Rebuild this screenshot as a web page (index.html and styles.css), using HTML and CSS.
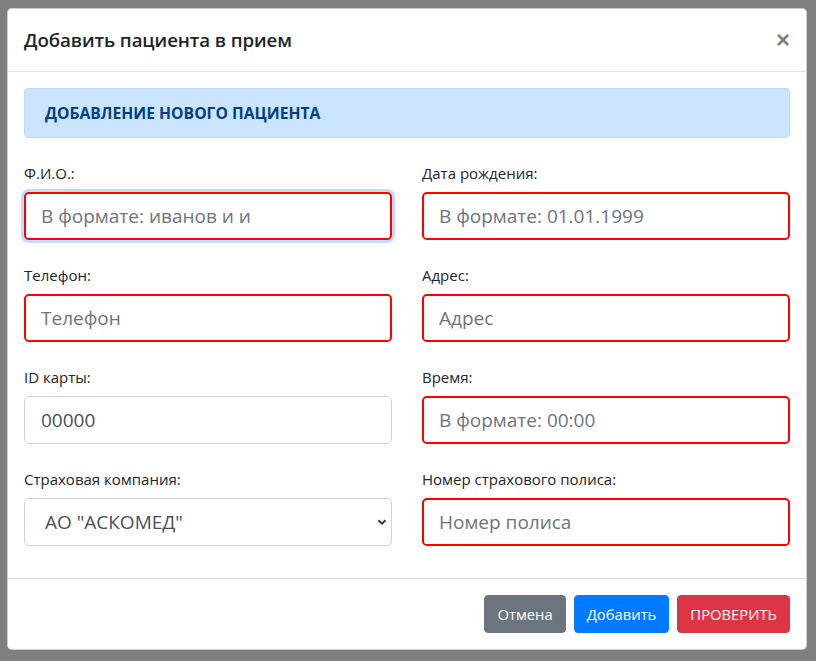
FILE: index.html
```html
<!DOCTYPE html>
<html lang="ru">
<head>
<meta charset="utf-8">
<title>Добавить пациента в прием</title>
<link rel="stylesheet" href="styles.css">
</head>
<body>
<div class="modal">
  <div class="modal-header">
    <h5 class="modal-title">Добавить пациента в прием</h5>
    <button class="close" type="button">&times;</button>
  </div>
  <div class="modal-body">
    <div class="alert">ДОБАВЛЕНИЕ НОВОГО ПАЦИЕНТА</div>
    <div class="form-grid">
      <div class="field">
        <label>Ф.И.О.:</label>
        <input class="control invalid focused" type="text" placeholder="В формате: иванов и и">
      </div>
      <div class="field">
        <label>Дата рождения:</label>
        <input class="control invalid" type="text" placeholder="В формате: 01.01.1999">
      </div>
      <div class="field">
        <label>Телефон:</label>
        <input class="control invalid" type="text" placeholder="Телефон">
      </div>
      <div class="field">
        <label>Адрес:</label>
        <input class="control invalid" type="text" placeholder="Адрес">
      </div>
      <div class="field">
        <label>ID карты:</label>
        <input class="control" type="text" value="00000">
      </div>
      <div class="field">
        <label>Время:</label>
        <input class="control invalid" type="text" placeholder="В формате: 00:00">
      </div>
      <div class="field">
        <label>Страховая компания:</label>
        <div class="select-wrap">
          <select class="control select">
            <option>АО "АСКОМЕД"</option>
          </select>
          <svg class="chevron" width="10" height="8" viewBox="0 0 10 8"><path d="M1.5 2.2 L5 5.7 L8.5 2.2" fill="none" stroke="#343a40" stroke-width="2"/></svg>
        </div>
      </div>
      <div class="field">
        <label>Номер страхового полиса:</label>
        <input class="control invalid" type="text" placeholder="Номер полиса">
      </div>
    </div>
  </div>
  <div class="modal-footer">
    <button class="btn btn-secondary" type="button">Отмена</button>
    <button class="btn btn-primary" type="button">Добавить</button>
    <button class="btn btn-danger" type="button">ПРОВЕРИТЬ</button>
  </div>
</div>
</body>
</html>
```

FILE: styles.css
```css
* { box-sizing: border-box; }

html, body {
  margin: 0;
  padding: 0;
  height: 100%;
}

body {
  background: #7f7f7f;
  font-family: "Open Sans", "Noto Sans", "Liberation Sans", sans-serif;
  font-size: 16px;
  line-height: 1.5;
  color: #212529;
  overflow: hidden;
}

.modal {
  width: 800px;
  margin: 8px 0 0 7px;
  background: #fff;
  border: 1px solid rgba(0, 0, 0, 0.2);
  border-radius: 4.8px;
}

.modal-header {
  display: flex;
  align-items: flex-start;
  justify-content: space-between;
  padding: 16px;
  border-bottom: 1px solid #dee2e6;
}

.modal-title {
  margin: 0;
  font-size: 18.7px;
  font-weight: 600;
  line-height: 30px;
  letter-spacing: -0.1px;
}

.close {
  padding: 16px;
  margin: -16px -16px -16px auto;
  background: transparent;
  border: 0;
  font-family: "Liberation Sans", sans-serif;
  font-size: 24px;
  font-weight: 700;
  line-height: 30px;
  color: #000;
  opacity: 0.5;
  text-shadow: 0 1px 0 #fff;
  cursor: pointer;
}

.modal-body {
  padding: 16px;
}

.alert {
  padding: 12px 20px;
  margin-bottom: 16px;
  background: #cce5ff;
  border: 1px solid #b8daff;
  border-radius: 4px;
  color: #004085;
  font-weight: 700;
  font-size: 15.7px;
  line-height: 24px;
}

.form-grid {
  display: grid;
  grid-template-columns: 1fr 1fr;
  column-gap: 30px;
}

.field {
  margin-bottom: 16px;
}

.field label {
  display: block;
  margin: 7px 0 7px;
  font-size: 15px;
  line-height: 24px;
  color: #212529;
}

.control {
  display: block;
  width: 100%;
  height: 48px;
  padding: 8px 16px;
  font-family: inherit;
  font-size: 19px;
  line-height: 30px;
  color: #495057;
  background: #fff;
  border: 1px solid #ced4da;
  border-radius: 4.8px;
  outline: none;
}

.control::placeholder {
  color: #6c757d;
  opacity: 1;
}

.control.invalid {
  border: 2px solid #ff0000;
  padding: 7px 15px;
}

.control.focused {
  box-shadow: 0 0 0 3px rgba(0, 123, 255, 0.25);
}

.select-wrap {
  position: relative;
}

.select {
  appearance: none;
  -webkit-appearance: none;
  padding-left: 20px;
}

.chevron {
  position: absolute;
  right: 5px;
  top: 20px;
}

.modal-footer {
  display: flex;
  justify-content: flex-end;
  align-items: center;
  padding: 12px;
  border-top: 1px solid #dee2e6;
}

.btn {
  margin: 4px;
  padding: 6px 12px;
  font-family: inherit;
  font-size: 14.8px;
  line-height: 24px;
  border: 1px solid transparent;
  border-radius: 4px;
  color: #fff;
  cursor: pointer;
}

.btn-secondary { background: #6c757d; border-color: #6c757d; }
.btn-primary { background: #007bff; border-color: #007bff; }
.btn-danger { background: #dc3545; border-color: #dc3545; }
```
